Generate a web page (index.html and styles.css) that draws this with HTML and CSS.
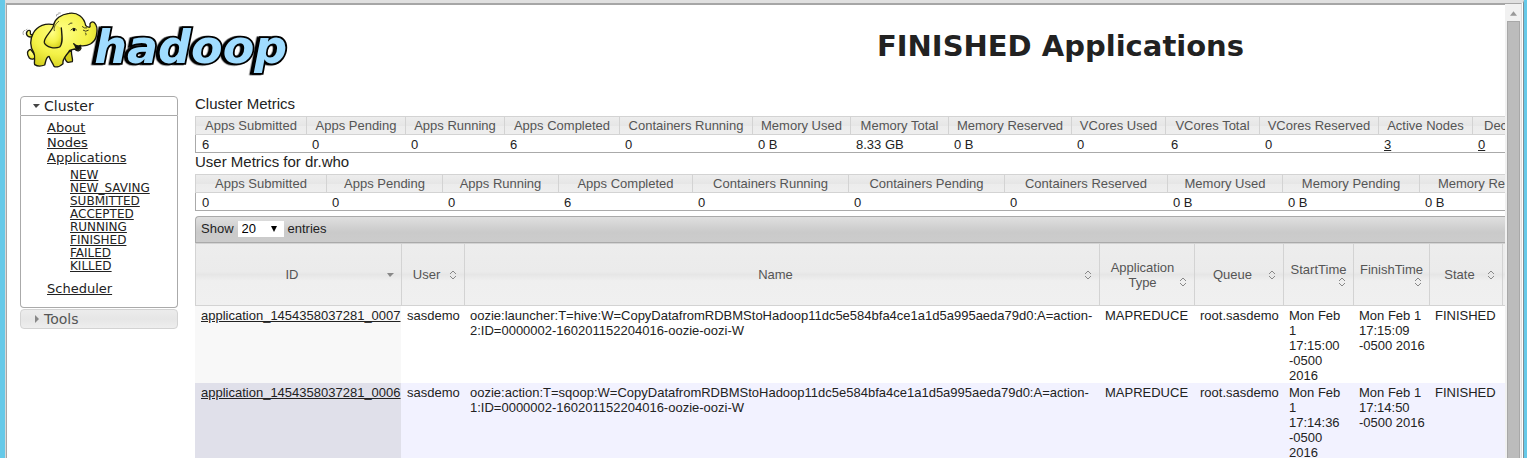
FILE: index.html
```html
<!DOCTYPE html>
<html lang="en">
<head>
<meta charset="utf-8">
<title>FINISHED Applications</title>
<link rel="stylesheet" href="styles.css">
</head>
<body>
<div class="window">
<div class="page">
  <header class="header">
    <svg class="logo" viewBox="60 30 816 198" role="img" aria-label="hadoop">
      <defs>
        <radialGradient id="skin" cx="0.45" cy="0.35" r="0.7">
          <stop offset="0" stop-color="#ffff88"/>
          <stop offset="0.6" stop-color="#f4f248"/>
          <stop offset="1" stop-color="#d4cf1c"/>
        </radialGradient>
      </defs>
      <text class="wordmark" x="283" y="190">hadoop</text>
      <g stroke="#1a1a10" stroke-width="4" stroke-linejoin="round" stroke-linecap="round" fill="url(#skin)">
        <path d="M96 110 C84 114 76 104 81 95 C85 88 93 91 91 98 C90 104 95 106 100 102" />
        <path d="M92 148 C80 151 80 163 88 174 C95 180 104 178 108 170 Z"/>
        <path d="M192 168 C196 178 198 188 205 187 L217 185 C220 178 214 172 214 150 Z" fill="#d4cf1c"/>
        <path d="M161 74 C137 68 112 78 100 99 C90 118 90 140 101 157 C108 171 101 181 104 194 C112 199 124 199 134 195 C138 184 137 171 147 169 C151 181 158 189 162 199 C171 203 183 197 189 191 C186 176 199 168 209 151 L224 147 C232 156 240 153 243 145 L240 137 C263 140 284 130 289 108 C293 91 290 74 282 67 C276 63 268 69 270 76 C272 84 263 83 257 76 C252 51 232 36 207 40 C182 43 165 57 161 74 Z"/>
        <path d="M162 72 C160 92 130 110 133 128 C139 142 163 147 179 141 C190 130 186 106 184 84"/>
        <path d="M176 64 C166 72 160 82 163 92" fill="none" stroke-width="2"/>
        <path d="M221 131 C228 139 236 139 242 136 C242 147 234 152 229 148 C226 144 229 138 221 131 Z" fill="#111"/>
        <path d="M206 74 Q210 67 216 69 M247 80 Q253 86 260 84 M250 91 Q257 97 265 91 M257 99 Q260 103 258 105" fill="none" stroke-width="2.5"/>
        <path d="M213 90 Q221 79 230 90" fill="none" stroke-width="2.5"/>
        <ellipse cx="222" cy="89" rx="4" ry="5" fill="#111" stroke="none"/>
        <path d="M169 48 Q167 42 175 42 M176 39 L181 39 M70 104 Q66 94 74 91 M78 90 L81 88" fill="none" stroke="#777" stroke-width="2"/>
      </g>
    </svg>
    <h1 class="title">FINISHED Applications</h1>
  </header>
  <div class="columns">
    <nav class="sidebar">
      <h3 class="menu-head open"><svg class="caret" viewBox="0 0 8 8"><path d="M1 2h7L4 6z" fill="#444"/></svg>Cluster</h3>
      <div class="menu-body">
        <ul class="menu">
          <li><a href="#about">About</a></li>
          <li><a href="#nodes">Nodes</a></li>
          <li><a href="#apps">Applications</a>
            <ul class="submenu">
              <li><a href="#new">NEW</a></li>
              <li><a href="#new-saving">NEW_SAVING</a></li>
              <li><a href="#submitted">SUBMITTED</a></li>
              <li><a href="#accepted">ACCEPTED</a></li>
              <li><a href="#running">RUNNING</a></li>
              <li><a href="#finished">FINISHED</a></li>
              <li><a href="#failed">FAILED</a></li>
              <li><a href="#killed">KILLED</a></li>
            </ul>
          </li>
          <li><a href="#scheduler">Scheduler</a></li>
        </ul>
      </div>
      <h3 class="menu-head closed"><svg class="caret" viewBox="0 0 8 8"><path d="M3 0v8l4-4z" fill="#888"/></svg>Tools</h3>
    </nav>
    <main class="content">
      <h2 class="section">Cluster Metrics</h2>
      <table class="metrics cluster">
        <colgroup><col class="w111"><col class="w99"><col class="w99"><col class="w115"><col class="w133"><col class="w98"><col class="w98"><col class="w123"><col class="w94"><col class="w94"><col class="w119"><col class="w94"><col class="w156"></colgroup>
        <thead><tr><th>Apps Submitted</th><th>Apps Pending</th><th>Apps Running</th><th>Apps Completed</th><th>Containers Running</th><th>Memory Used</th><th>Memory Total</th><th>Memory Reserved</th><th>VCores Used</th><th>VCores Total</th><th>VCores Reserved</th><th>Active Nodes</th><th class="cut">Decommissioned</th></tr></thead>
        <tbody><tr><td>6</td><td>0</td><td>0</td><td>6</td><td>0</td><td>0 B</td><td>8.33 GB</td><td>0 B</td><td>0</td><td>6</td><td>0</td><td><a href="#active">3</a></td><td><a href="#decommissioned">0</a></td></tr></tbody>
      </table>
      <h2 class="section">User Metrics for dr.who</h2>
      <table class="metrics user">
        <colgroup><col class="w131"><col class="w116"><col class="w116"><col class="w134"><col class="w156"><col class="w156"><col class="w163"><col class="w115"><col class="w137"><col class="w143"></colgroup>
        <thead><tr><th>Apps Submitted</th><th>Apps Pending</th><th>Apps Running</th><th>Apps Completed</th><th>Containers Running</th><th>Containers Pending</th><th>Containers Reserved</th><th>Memory Used</th><th>Memory Pending</th><th>Memory Reserved</th></tr></thead>
        <tbody><tr><td>0</td><td>0</td><td>0</td><td>6</td><td>0</td><td>0</td><td>0</td><td>0 B</td><td>0 B</td><td>0 B</td></tr></tbody>
      </table>
      <div class="toolbar">
        <label for="length">Show</label>
        <span class="picker"><select id="length"><option>20</option><option>40</option><option>60</option></select><svg class="picker-arrow" viewBox="0 0 6 6"><path d="M0 0h6L3 6z"/></svg></span>
        <span>entries</span>
      </div>
      <table class="apps">
        <colgroup><col class="w206"><col class="w63"><col class="w635"><col class="w95"><col class="w89"><col class="w70"><col class="w76"><col class="w73"><col class="w95"></colgroup>
        <thead><tr>
          <th><div class="sort"><span>ID</span><svg viewBox="0 0 8 10"><path class="solid" d="M1 3h7L4 7z"/></svg></div></th>
          <th><div class="sort"><span>User</span><svg viewBox="0 0 8 10"><path d="M1 4l3-3 3 3M1 6l3 3 3-3"/></svg></div></th>
          <th><div class="sort"><span>Name</span><svg viewBox="0 0 8 10"><path d="M1 4l3-3 3 3M1 6l3 3 3-3"/></svg></div></th>
          <th><div class="sort low"><span>Application Type</span><svg viewBox="0 0 8 10"><path d="M1 4l3-3 3 3M1 6l3 3 3-3"/></svg></div></th>
          <th><div class="sort"><span>Queue</span><svg viewBox="0 0 8 10"><path d="M1 4l3-3 3 3M1 6l3 3 3-3"/></svg></div></th>
          <th><div class="sort stacked"><span>StartTime</span><svg viewBox="0 0 8 10"><path d="M1 4l3-3 3 3M1 6l3 3 3-3"/></svg></div></th>
          <th><div class="sort stacked"><span>FinishTime</span><svg viewBox="0 0 8 10"><path d="M1 4l3-3 3 3M1 6l3 3 3-3"/></svg></div></th>
          <th><div class="sort"><span>State</span><svg viewBox="0 0 8 10"><path d="M1 4l3-3 3 3M1 6l3 3 3-3"/></svg></div></th>
          <th></th>
        </tr></thead>
        <tbody>
          <tr><td class="id"><a href="#app7">application_1454358037281_0007</a></td><td>sasdemo</td><td>oozie:launcher:T=hive:W=CopyDatafromRDBMStoHadoop11dc5e584bfa4ce1a1d5a995aeda79d0:A=action-2:ID=0000002-160201152204016-oozie-oozi-W</td><td>MAPREDUCE</td><td>root.sasdemo</td><td>Mon Feb 1 17:15:00 -0500 2016</td><td>Mon Feb 1 17:15:09 -0500 2016</td><td>FINISHED</td><td></td></tr>
          <tr><td class="id"><a href="#app6">application_1454358037281_0006</a></td><td>sasdemo</td><td>oozie:action:T=sqoop:W=CopyDatafromRDBMStoHadoop11dc5e584bfa4ce1a1d5a995aeda79d0:A=action-1:ID=0000002-160201152204016-oozie-oozi-W</td><td>MAPREDUCE</td><td>root.sasdemo</td><td>Mon Feb 1 17:14:36 -0500 2016</td><td>Mon Feb 1 17:14:50 -0500 2016</td><td>FINISHED</td><td></td></tr>
        </tbody>
      </table>
    </main>
  </div>
</div>
<div class="scrollbar"><svg class="scroll-up" viewBox="0 0 8 5"><path d="M0 5h8L4 0z" fill="#999"/></svg><div class="thumb"></div></div>
</div>
</body>
</html>
```
FILE: styles.css
```css
* { box-sizing: border-box; }

body {
  margin: 0;
  padding: 0 3px 0 5px;
  height: 100vh;
  overflow: hidden;
  background: #66c9e8;
  color: #222;
  font: 13px/15px "Liberation Sans", Arial, sans-serif;
}

a { color: inherit; }
h1, h2, h3, ul { margin: 0; padding: 0; font-weight: normal; }
ul { list-style: none; }

.window {
  display: flex;
  height: 100%;
  padding-right: 1px;
  background: #fff;
  border-top: 3px solid #e0e0e0;
  border-left: 1px solid #d8d8d8;
  border-right: 1px solid #7e8c92;
}

.page {
  flex: 1;
  min-width: 0;
  overflow: hidden;
  border-top: 2px solid #a6a6a6;
  border-left: 1px solid #a6a6a6;
}

.scrollbar {
  display: flex;
  flex-direction: column;
  align-items: center;
  width: 17px;
  padding-top: 7px;
  background: #f1f1f1;
  border-top: 1px solid #a6a6a6;
  border-right: 1px solid #ddd;
}
.scroll-up { width: 7px; height: 5px; }
.thumb {
  flex: 1;
  width: 13px;
  margin-top: 5px;
  background: #bcbcbc;
  border: 1px solid #a8a8a8;
  border-bottom: 0;
}

.header {
  display: flex;
  align-items: flex-start;
  height: 91px;
  padding: 5px 0 0 13px;
}
.logo { flex: none; width: 272px; height: 66px; }
.wordmark {
  font: italic bold 138px "DejaVu Sans", sans-serif;
  fill: #a0dcff;
  stroke: #000;
  stroke-width: 11px;
  stroke-linejoin: miter;
  paint-order: stroke;
  filter: drop-shadow(-7px 1px 0 #000);
}
.title {
  flex: 1;
  padding: 18px 0 0 324px;
  text-align: center;
  font: bold 29px/36px "DejaVu Sans", Verdana, sans-serif;
  white-space: nowrap;
}

.columns { display: flex; gap: 17px; padding-left: 13px; }

.sidebar { flex: none; width: 158px; font-family: "DejaVu Sans", Verdana, sans-serif; }
.menu-head {
  display: flex;
  align-items: center;
  gap: 4px;
  height: 20px;
  padding-left: 11px;
  font-size: 14px;
  line-height: 18px;
}
.caret { width: 8px; height: 8px; }
.open { border: 1px solid #aaa; border-radius: 4px 4px 0 0; }
.closed {
  margin-top: 1px;
  color: #555;
  border: 1px solid #d3d3d3;
  border-radius: 4px;
  background: linear-gradient(#ececec, #e6e6e6 50%, #eee);
}
.menu-body {
  padding: 4px 0 11px 26px;
  border: 1px solid #aaa;
  border-top: 0;
  border-radius: 0 0 4px 4px;
}
.submenu { padding: 4px 0 8px 23px; font-size: 12px; line-height: 13px; }

.content { flex: 1; min-width: 0; overflow: hidden; }
.section { padding: 0 0 5px; font-size: 15px; line-height: 15px; }
.metrics + .section { padding: 1px 0 5px; }

table { border-collapse: separate; border-spacing: 0; table-layout: fixed; width: 0; }
td, th { white-space: nowrap; text-align: left; vertical-align: top; }
th {
  padding: 0;
  text-align: center;
  vertical-align: middle;
  font-weight: normal;
  color: #555;
  background: linear-gradient(#ededed, #e6e6e6 50%, #ececec 51%, #eee);
  border: solid #d3d3d3;
  border-width: 1px 0 1px 1px;
}
.metrics th { height: 19px; padding-top: 1px; line-height: 16px; }
.metrics td { height: 18px; padding: 2px 6px 0; line-height: 15px; border-bottom: 1px solid #aaa; }
.metrics td:first-child { border-left: 1px solid #aaa; }
.metrics .cut { padding-left: 11px; text-align: left; }

.toolbar {
  display: flex;
  align-items: center;
  gap: 4px;
  height: 27px;
  margin-top: 5px;
  padding: 0 0 2px 5px;
  border: 1px solid #aaa;
  border-right: 0;
  border-radius: 4px 0 0 0;
  background: linear-gradient(#dfdfdf, #cacaca 60%, #ccc);
}
.picker { position: relative; display: flex; }
.picker select {
  appearance: none;
  width: 46px;
  height: 16px;
  padding: 0 4px;
  border: 0;
  background: #fff;
  color: #000;
  font: inherit;
}
.picker-arrow { position: absolute; right: 7px; top: 5px; width: 6px; height: 6px; }

.apps th { height: 63px; background: linear-gradient(#ededed, #ebebeb 45%, #e6e6e6 50%, #efefef 60%, #f0f0f0); }
.apps td { height: 77px; padding: 2px 3px 0 6px; white-space: normal; }
.apps .id { background: #f8f8f8; white-space: nowrap; }
.apps tr:nth-child(2) td { background: #f2f2ff; }
.apps tr:nth-child(2) .id { background: #e0e0ea; }

.sort { display: flex; align-items: center; gap: 4px; padding: 0 7px 0 6px; }
.sort span { flex: 1; }
.sort svg { flex: none; width: 8px; height: 10px; fill: none; stroke: #888; }
.sort .solid { fill: #888; stroke: none; }
.low { align-items: flex-end; white-space: normal; }
.low svg { margin-bottom: 3px; }
.low span { margin: 0 -4px 0 0; }
.stacked { flex-direction: column; gap: 0; padding-left: 7px; }
.stacked svg { align-self: flex-end; }

.w63 { width: 63px; } .w70 { width: 70px; } .w73 { width: 73px; } .w76 { width: 76px; }
.w89 { width: 89px; } .w94 { width: 94px; } .w95 { width: 95px; } .w98 { width: 98px; }
.w99 { width: 99px; } .w111 { width: 111px; } .w115 { width: 115px; } .w116 { width: 116px; }
.w119 { width: 119px; } .w123 { width: 123px; } .w131 { width: 131px; } .w133 { width: 133px; }
.w134 { width: 134px; } .w137 { width: 137px; } .w143 { width: 143px; } .w156 { width: 156px; }
.w163 { width: 163px; } .w206 { width: 206px; } .w635 { width: 635px; }
```
